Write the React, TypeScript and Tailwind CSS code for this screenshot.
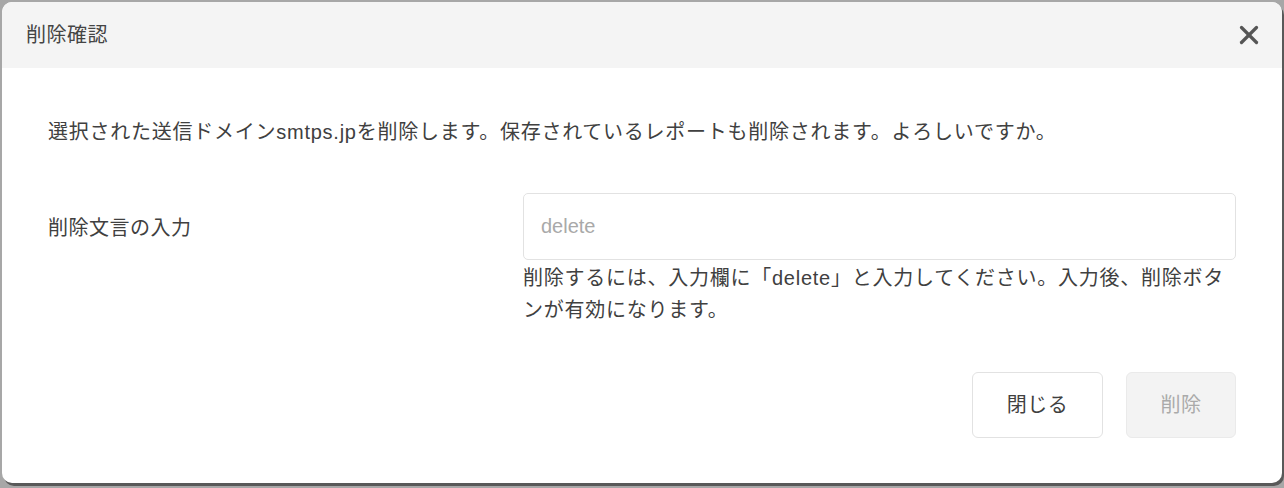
import { X } from "lucide-react";

const FONT = "[font-family:'Liberation_Sans','Noto_Sans_CJK_JP',sans-serif]";

export default function App() {
  return (
    <div className={`h-[488px] w-[1284px] overflow-hidden bg-[#a7a7a7] pl-[2px] pt-[2px] ${FONT}`}>
      <div className="flex h-[481px] w-[1280px] flex-col overflow-hidden rounded-[10px] bg-white shadow-[2px_3px_0_0_#595959]">
        {/* header */}
        <div className="flex h-[66px] shrink-0 items-center justify-between bg-[#f4f4f4] pl-[24px] pr-[18px]">
          <h2 className="text-[20px] tracking-[0.5px] text-[#444]">削除確認</h2>
          <X className="h-[30px] w-[30px] text-[#555]" strokeWidth={2.6} />
        </div>

        {/* body */}
        <div className="flex flex-col px-[46px] pt-[48px] text-[20px] leading-[32px] tracking-[0.75px] text-[#404040]">
          <p>
            選択された送信ドメインsmtps.jpを削除します。保存されているレポートも削除されます。よろしいですか。
          </p>

          <div className="mt-[45px] grid grid-cols-[475px_1fr]">
            <div className="flex h-[67px] items-center pt-[2px] tracking-[0.5px]">削除文言の入力</div>
            <div className="flex flex-col">
              <input
                type="text"
                placeholder="delete"
                className="h-[67px] w-full rounded-[5px] border border-[#e2e2e2] px-[17px] text-[20px] tracking-normal outline-none placeholder:text-[#a9a9a9]"
              />
              <p className="mt-[2px]">
                削除するには、入力欄に「delete」と入力してください。入力後、削除ボタンが有効になります。
              </p>
            </div>
          </div>

          <div className="mt-[46px] flex justify-end gap-[23px]">
            <button className="h-[66px] w-[131px] rounded-[6px] border border-[#e2e2e2] bg-white text-[20px] tracking-[0.5px] text-[#404040]">
              閉じる
            </button>
            <button
              disabled
              className="h-[66px] w-[110px] rounded-[6px] border border-[#eaeaea] bg-[#f3f3f3] text-[20px] tracking-[0.5px] text-[#aaa]"
            >
              削除
            </button>
          </div>
        </div>
      </div>
    </div>
  );
}
